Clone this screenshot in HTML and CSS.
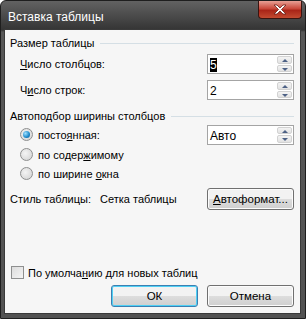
FILE: index.html
```html
<!DOCTYPE html>
<html lang="ru">
<head>
    <meta charset="UTF-8">
    <title>Вставка таблицы</title>
    <link rel="stylesheet" href="styles.css">
</head>
<body>
    <div class="window">
        <div class="titlebar">
            <span class="title">Вставка таблицы</span>
            <button class="close" aria-label="Закрыть">
                <svg width="16" height="11" viewBox="0 0 16 11">
                    <path d="M2 1h3l3 3 3-3h3l-4.5 4.5L14 10h-3l-3-3-3 3H2l4.5-4.5z" fill="#fff" stroke="#6a1f18" stroke-width="0.8"/>
                </svg>
            </button>
        </div>
        <div class="content">
            <div class="group-head"><span>Размер таблицы</span><i></i></div>
            <div class="row indent">
                <label><u>Ч</u>исло столбцов:</label>
                <div class="spin"><span class="val"><b class="sel">5</b></span><span class="arrows"><em class="up"></em><em class="down"></em></span></div>
            </div>
            <div class="row indent">
                <label>Ч<u>и</u>сло строк:</label>
                <div class="spin"><span class="val">2</span><span class="arrows"><em class="up"></em><em class="down"></em></span></div>
            </div>

            <div class="group-head second"><span>Автоподбор ширины столбцов</span><i></i></div>
            <div class="row indent radio-row first">
                <label class="radio"><span class="dot on"></span><span>посто<u>я</u>нная:</span></label>
                <div class="spin"><span class="val">Авто</span><span class="arrows"><em class="up"></em><em class="down"></em></span></div>
            </div>
            <div class="row indent radio-row">
                <label class="radio"><span class="dot"></span><span>по содер<u>ж</u>имому</span></label>
            </div>
            <div class="row indent radio-row">
                <label class="radio"><span class="dot"></span><span>по ширине <u>о</u>кна</span></label>
            </div>

            <div class="row style-row">
                <span class="style-label">Стиль таблицы:</span>
                <span class="style-name">Сетка таблицы</span>
                <button class="btn auto"><u>А</u>втоформат...</button>
            </div>

            <div class="spacer"></div>

            <label class="check"><span class="box"></span><span>По умолча<u>н</u>ию для новых таблиц</span></label>
            <div class="buttons">
                <button class="btn default">ОК</button>
                <button class="btn">Отмена</button>
            </div>
        </div>
    </div>
</body>
</html>
```

FILE: styles.css
```css
body {
    margin: 0;
    font-family: "Liberation Sans", Arial, sans-serif;
    font-size: 11px;
    color: #000;
}
.window {
    width: 306px;
    height: 319px;
    box-sizing: border-box;
    display: flex;
    flex-direction: column;
    background: linear-gradient(#626262, #343434 29px, #575757 31px, #525252);
    border-radius: 6px 6px 0 0;
    border: 1px solid #1e1e1e;
    padding: 0 4px 4px 3px;
}
.titlebar {
    height: 28px;
    display: flex;
    align-items: flex-start;
    justify-content: space-between;
    flex-shrink: 0;
}
.title {
    color: #fff;
    font-size: 12px;
    margin: 9px 0 0 4px;
}
.close {
    width: 44px;
    height: 18px;
    margin: 0 -1px 0 0;
    padding: 0;
    border: 1px solid #3a1410;
    border-top: none;
    border-radius: 0 0 4px 4px;
    background: linear-gradient(#e8a095, #c9483a 45%, #a92518 55%, #c24a30);
    display: flex;
    align-items: center;
    justify-content: center;
}
.content {
    flex: 1;
    background: #f6f6f6;
    border: 1px solid #3a3a3a;
    padding: 4px 6px 5px 5px;
    display: flex;
    flex-direction: column;
}
.group-head {
    display: flex;
    align-items: center;
    height: 17px;
}
.group-head i {
    flex: 1;
    height: 1px;
    background: #d5dfe5;
    margin: 1px 0 0 6px;
}
.group-head.second {
    margin-top: 4px;
}
.row {
    display: flex;
    align-items: center;
    justify-content: space-between;
    height: 26px;
}
.indent {
    padding-left: 10px;
}
.radio-row {
    height: 19px;
}
.radio-row.first {
    height: 21px;
}
.spin {
    width: 87px;
    height: 20px;
    box-sizing: border-box;
    border: 1px solid #a4a4a4;
    background: #fff;
    display: flex;
}
.val {
    flex: 1;
    padding: 3px 0 0 2px;
    font-size: 12px;
}
.sel {
    background: #000;
    color: #fff;
    font-weight: normal;
}
.arrows {
    width: 15px;
    display: flex;
    flex-direction: column;
    gap: 1px;
    padding: 1px;
}
.arrows em {
    flex: 1;
    background: linear-gradient(#f4f4f4, #e2e2e2);
    border: 1px solid #d2d2d2;
    border-radius: 2px;
    position: relative;
}
.arrows em::after {
    content: "";
    position: absolute;
    left: 4px;
    top: 2px;
    border-left: 3px solid transparent;
    border-right: 3px solid transparent;
}
.arrows .up::after {
    border-bottom: 3px solid #4d6185;
}
.arrows .down::after {
    border-top: 3px solid #4d6185;
}
.radio {
    display: flex;
    align-items: center;
    gap: 5px;
}
.dot {
    width: 11px;
    height: 11px;
    border-radius: 50%;
    border: 1px solid #8e8f8f;
    background: radial-gradient(circle at 40% 40%, #f4f4f4, #d0d0d0);
    position: relative;
}
.dot.on::after {
    content: "";
    position: absolute;
    left: 2px;
    top: 2px;
    width: 7px;
    height: 7px;
    border-radius: 50%;
    background: radial-gradient(circle at 35% 35%, #9fe0ff, #1b88c9 60%, #0d4f8a);
}
.style-row {
    justify-content: flex-start;
    height: 30px;
    margin-top: 1px;
}
.style-name {
    margin-left: 9px;
    flex: 1;
}
.btn {
    font-family: "Liberation Sans", Arial, sans-serif;
    font-size: 11.5px;
    height: 22px;
    width: 87px;
    padding: 0;
    border: 1px solid #707070;
    border-radius: 3px;
    background: linear-gradient(#f2f2f2 50%, #dddddd 50%, #cfcfcf);
    color: #000;
    box-shadow: inset 0 0 0 1px #fcfcfc;
}
.btn.default {
    border-color: #3c7fb1;
    box-shadow: inset 0 0 0 1px #4fd0f5;
}
.spacer {
    flex: 1;
}
.check {
    display: flex;
    align-items: center;
    gap: 4px;
    margin-left: 1px;
}
.box {
    width: 11px;
    height: 11px;
    border: 1px solid #8e8f8f;
    background: linear-gradient(135deg, #dcdcdc, #f4f4f4);
}
.buttons {
    display: flex;
    justify-content: flex-end;
    gap: 9px;
    margin-top: 6px;
    margin-bottom: 1px;
}
```
